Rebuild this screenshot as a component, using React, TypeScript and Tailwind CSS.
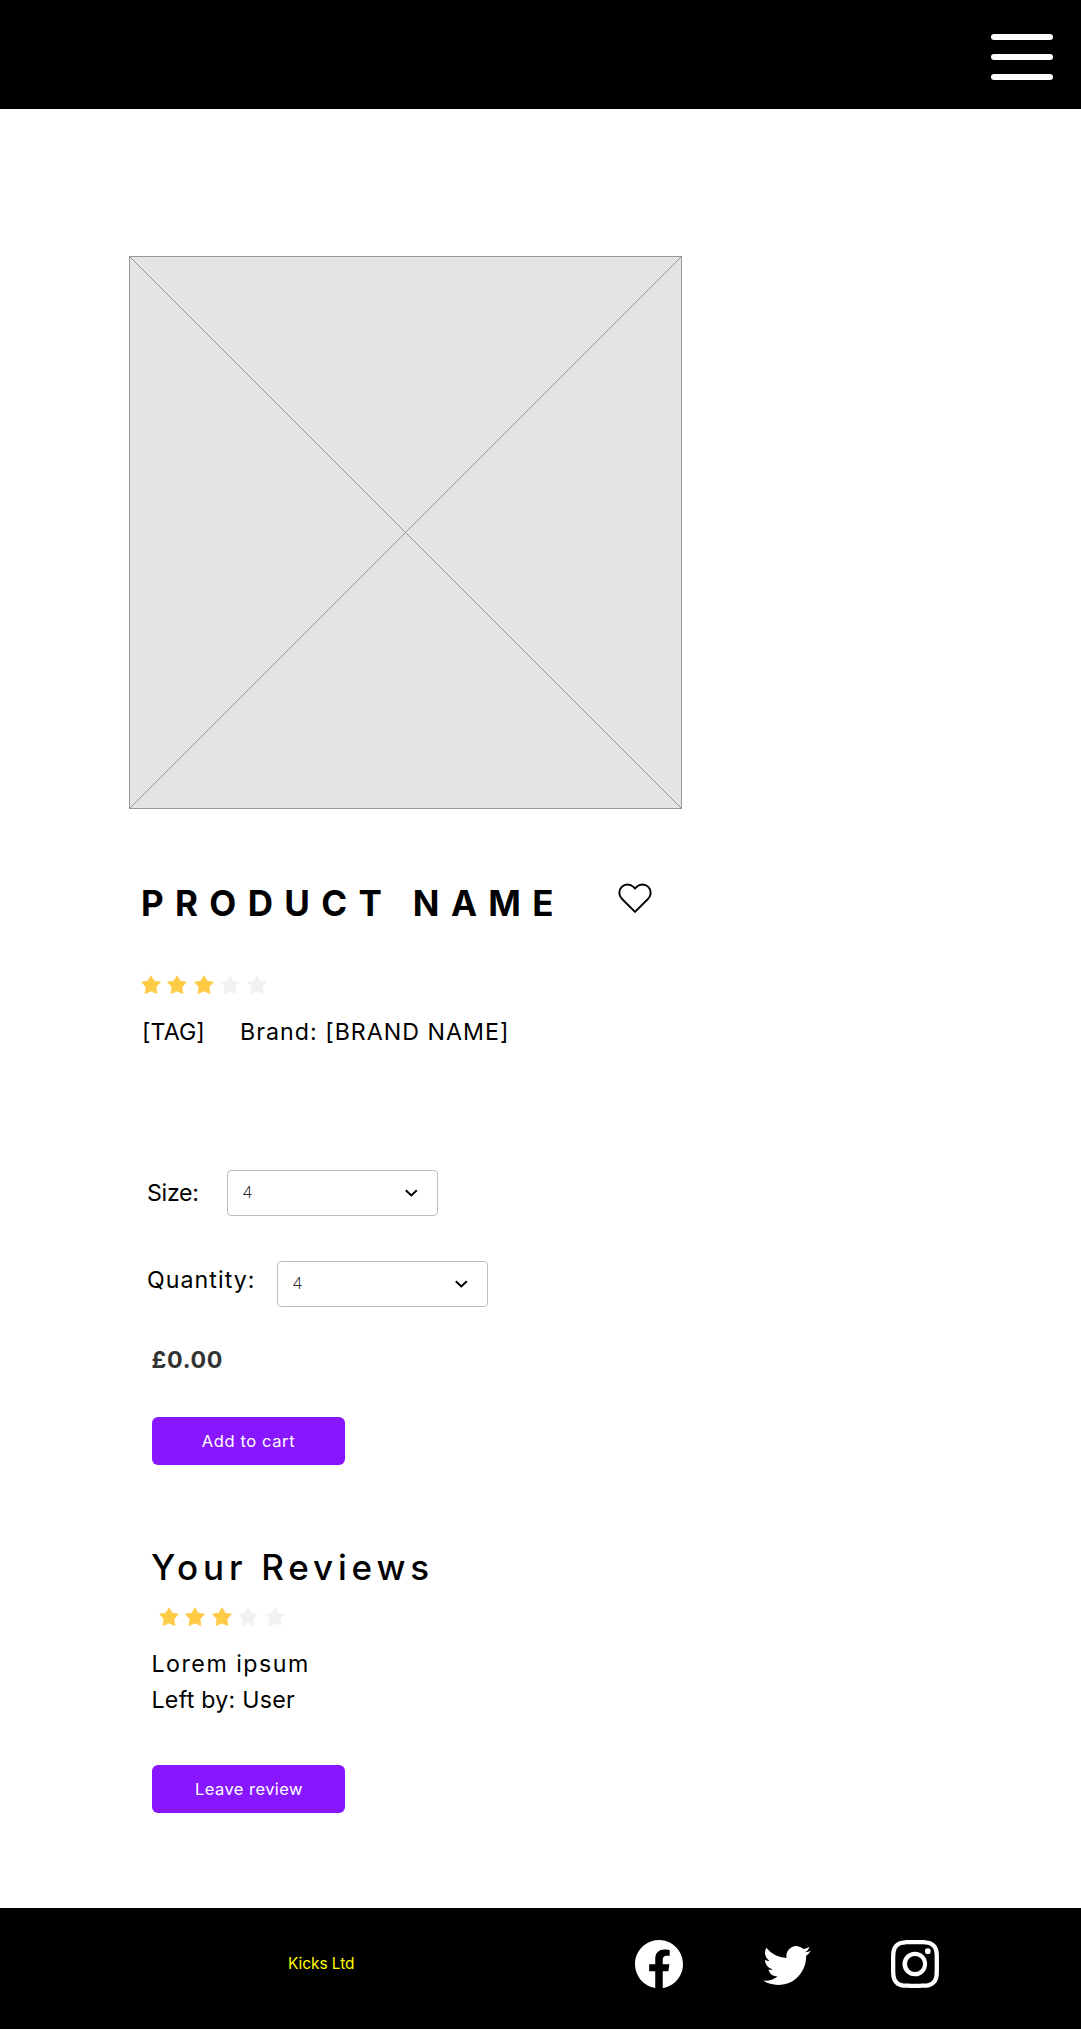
import React from "react";
import { BsFacebook, BsInstagram, BsTwitter } from "react-icons/bs";

function Stars({ value }: { value: number }) {
  return (
    <div className="flex gap-[6.6px]">
      {[0, 1, 2, 3, 4].map((i) => (
        <svg
          key={i}
          viewBox="0 0 20 20"
          className={i < value ? "h-5 w-5 text-[#ffca45]" : "h-5 w-5 text-[#f1f1f1]"}
        >
          <path
            d="M10 0.6 L13.1 6.1 L19.5 7.1 L15.1 11.9 L16 18.7 L10 16.1 L4 18.7 L4.9 11.9 L0.5 7.1 L6.9 6.1 Z"
            fill="currentColor"
            stroke="currentColor"
            strokeWidth="0.6"
            strokeLinejoin="round"
          />
        </svg>
      ))}
    </div>
  );
}

function Select({ value }: { value: string }) {
  return (
    <button className="flex h-[46px] w-[211px] items-center justify-between rounded border border-[#bdbdbd] pr-4 pl-[15px]">
      <span className="font-['Open_Sans',sans-serif] text-[15.5px] font-light text-black">{value}</span>
      <svg viewBox="0 0 20 20" className="h-5 w-5" fill="none" stroke="#000" strokeWidth="2">
        <path d="M4.8 7.2 L10.3 12.4 L15.8 7.2" />
      </svg>
    </button>
  );
}

function ActionButton({ children, className }: { children: React.ReactNode; className: string }) {
  return (
    <button className="flex h-12 w-[193px] items-center justify-center rounded-md bg-[#8817ff] text-[16.5px] text-white">
      <span className={className}>{children}</span>
    </button>
  );
}

export default function App() {
  return (
    <div className="flex h-[2031px] w-[1081px] flex-col bg-white font-['Inter',sans-serif] text-black">
      <header className="flex h-[109px] items-start justify-end bg-black pt-[34px] pr-7">
        <button className="flex w-[62px] flex-col gap-[14px]" aria-label="Menu">
          <span className="h-1.5 w-full rounded-[3px] bg-white" />
          <span className="h-1.5 w-full rounded-[3px] bg-white" />
          <span className="h-1.5 w-full rounded-[3px] bg-white" />
        </button>
      </header>

      <main className="flex flex-col items-start pt-[147px]">
        <div className="ml-[129px] h-[553px] w-[553px] border border-[#999] bg-[#e4e4e4]">
          <svg viewBox="0 0 551 551" className="h-full w-full" stroke="#999" strokeWidth="1">
            <path d="M0 0 L551 551 M551 0 L0 551" />
          </svg>
        </div>

        <div className="mt-[74px] ml-[141px] flex h-10 items-center">
          <h1 className="w-[476px] text-[35px] leading-10 font-bold tracking-[11.35px] whitespace-nowrap">
            PRODUCT NAME
          </h1>
          <svg
            viewBox="0 0 24 24"
            className="mb-[10px] h-9 w-9"
            fill="none"
            stroke="#000"
            strokeWidth="1.33"
            strokeLinecap="round"
            strokeLinejoin="round"
          >
            <path d="M20.84 4.61a5.5 5.5 0 0 0-7.78 0L12 5.67l-1.06-1.06a5.5 5.5 0 0 0-7.78 7.78l1.06 1.06L12 21.23l7.78-7.78 1.06-1.06a5.5 5.5 0 0 0 0-7.78z" />
          </svg>
        </div>

        <div className="mt-[52px] ml-[140.5px]">
          <Stars value={3} />
        </div>

        <div className="mt-[21px] ml-[142px] flex text-[23.2px] leading-8 whitespace-nowrap">
          <span className="w-[98px] tracking-[0.09px]">[TAG]</span>
          <span className="tracking-[1.02px]">Brand: [BRAND NAME]</span>
        </div>

        <div className="mt-[122px] ml-[147px] flex items-center">
          <span className="w-20 text-[23.2px] leading-8 tracking-[-0.3px]">Size:</span>
          <Select value="4" />
        </div>

        <div className="mt-[45px] ml-[147px] flex items-start">
          <span className="mt-[3px] w-[130px] text-[23.2px] leading-8 tracking-[1.05px]">Quantity:</span>
          <Select value="4" />
        </div>

        <p className="mt-[37px] ml-[151.5px] text-[23.2px] leading-8 font-bold tracking-[0.7px] text-[#333]">£0.00</p>

        <div className="mt-[41px] ml-[152px]">
          <ActionButton className="tracking-[0.6px]">Add to cart</ActionButton>
        </div>

        <h2 className="mt-[82px] ml-[151px] text-[35px] leading-10 font-medium tracking-[4.8px]">Your Reviews</h2>

        <div className="mt-5 ml-[158.5px]">
          <Stars value={3} />
        </div>

        <div className="mt-[19px] ml-[151.5px] text-[23.2px] leading-9">
          <p className="tracking-[1.5px]">Lorem ipsum</p>
          <p className="tracking-[0.25px]">Left by: User</p>
        </div>

        <div className="mt-[47px] ml-[152px]">
          <ActionButton className="pl-px tracking-[0.45px]">Leave review</ActionButton>
        </div>
      </main>

      <footer className="mt-[95px] flex h-[121px] items-center bg-black pb-[9px] pl-[288px]">
        <span className="w-[347px] text-[15.5px] leading-6 tracking-[-0.08px] text-[#ffff00]">Kicks Ltd</span>
        <div className="flex gap-20 text-white">
          <BsFacebook size={48} />
          <BsTwitter size={48} />
          <BsInstagram size={48} />
        </div>
      </footer>
    </div>
  );
}
